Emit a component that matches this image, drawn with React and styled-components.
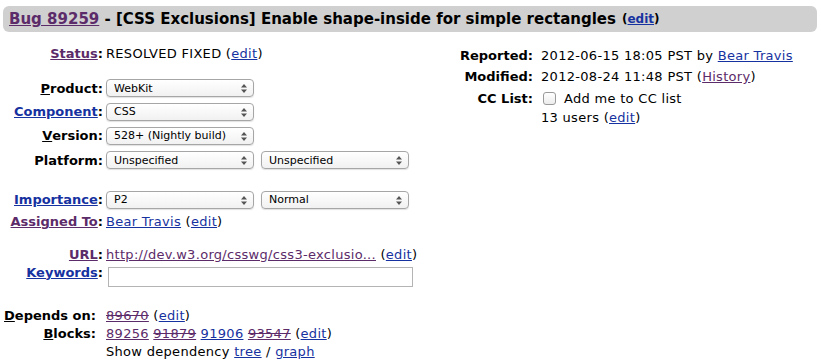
import React from 'react';
import styled, { createGlobalStyle } from 'styled-components';

const GlobalStyle = createGlobalStyle`
  body {
    margin: 0;
    background: #fff;
    font-family: "DejaVu Sans", Verdana, sans-serif;
    font-size: 13px;
    color: #000;
  }
`;

const Page = styled.div`
  width: 821px;
  height: 362px;
  overflow: hidden;
  padding: 6px 4px 0 3px;
  box-sizing: border-box;
`;

const TitleBar = styled.div`
  background: #d0d0d0;
  border-radius: 6px;
  height: 26px;
  display: flex;
  align-items: center;
  padding-left: 6px;
  font-size: 15px;
  font-weight: bold;
  white-space: nowrap;
`;

const Link = styled.a`
  color: ${(p) => (p.$visited ? '#5c2b69' : '#1632a0')};
  text-decoration: ${(p) => (p.$strike ? 'underline line-through' : 'underline')};
  cursor: pointer;
`;

const SmallEdit = styled.span`
  font-size: 12px;
  margin-left: 6px;
`;

const Columns = styled.div`
  display: flex;
  gap: 34px;
`;

const LeftColumn = styled.div`
  width: 410px;
  padding-top: 12px;
`;

const RightColumn = styled.div`
  padding-top: 12.5px;
`;

const FieldGrid = styled.div`
  display: grid;
  grid-template-columns: ${(p) => p.$labelWidth}px 1fr;
  margin-top: ${(p) => p.$top || 0}px;
`;

const Label = styled.div`
  font-weight: bold;
  text-align: right;
  padding-right: ${(p) => p.$pad ?? 3}px;
  height: ${(p) => p.$h}px;
  display: flex;
  align-items: center;
  justify-content: flex-end;
  white-space: nowrap;
`;

const Value = styled.div`
  height: ${(p) => p.$h}px;
  display: flex;
  align-items: ${(p) => (p.$top ? 'flex-start' : 'center')};
  padding-top: ${(p) => p.$top || 0}px;
  box-sizing: border-box;
  gap: ${(p) => p.$gap ?? 0}px;
  white-space: nowrap;
  letter-spacing: 0.3px;
`;

const U = styled.span`
  text-decoration: underline;
`;

const SelectWrap = styled.div`
  position: relative;
  width: 148px;
  height: 18px;
  letter-spacing: 0;
`;

const Select = styled.select`
  appearance: none;
  width: 100%;
  height: 100%;
  border: 1px solid #a6a6a6;
  border-radius: 4px;
  background: linear-gradient(#ffffff, #f1f1f1);
  box-shadow: 0 1px 1px rgba(0, 0, 0, 0.12);
  font-family: "DejaVu Sans", Verdana, sans-serif;
  font-size: 11px;
  color: #000;
  padding: 0 0 0 7px;
  margin: 0;
`;

const Arrows = styled.svg`
  position: absolute;
  right: 7px;
  top: 5px;
  pointer-events: none;
`;

const Keywords = styled.input`
  width: 305px;
  height: 20px;
  box-sizing: border-box;
  border: 1px solid #b4b4b4;
  margin: 0 0 0 2px;
`;

const Checkbox = styled.span`
  display: inline-block;
  width: 11px;
  height: 11px;
  border: 1px solid #9a9a9a;
  border-radius: 3px;
  background: linear-gradient(#fff, #ececec);
  margin: 0 8px 0 2px;
`;

function Dropdown({ value }) {
  return (
    <SelectWrap>
      <Select defaultValue={value}>
        <option>{value}</option>
      </Select>
      <Arrows width="6" height="9" viewBox="0 0 6 9">
        <path d="M0 3.5 L3 0 L6 3.5 Z M0 5.5 L3 9 L6 5.5 Z" fill="#555" />
      </Arrows>
    </SelectWrap>
  );
}

export default function App() {
  return (
    <Page>
      <GlobalStyle />
      <TitleBar>
        <Link $visited>Bug 89259</Link>
        &nbsp;- [CSS Exclusions] Enable shape-inside for simple rectangles
        <SmallEdit>
          (<Link>edit</Link>)
        </SmallEdit>
      </TitleBar>

      <Columns>
        <LeftColumn>
          <FieldGrid $labelWidth={103}>
            <Label $h={18}><Link $visited>Status</Link>:</Label>
            <Value $h={18}>RESOLVED FIXED (<Link>edit</Link>)</Value>
          </FieldGrid>

          <FieldGrid $labelWidth={103} $top={14.5}>
            <Label $h={23}><U>P</U>roduct:</Label>
            <Value $h={23}><Dropdown value="WebKit" /></Value>
            <Label $h={24}><Link>Component</Link>:</Label>
            <Value $h={24}><Dropdown value="CSS" /></Value>
            <Label $h={24}><U>V</U>ersion:</Label>
            <Value $h={24}><Dropdown value="528+ (Nightly build)" /></Value>
            <Label $h={25}>Platform:</Label>
            <Value $h={25} $gap={7}>
              <Dropdown value="Unspecified" />
              <Dropdown value="Unspecified" />
            </Value>
          </FieldGrid>

          <FieldGrid $labelWidth={103} $top={15}>
            <Label $h={24}><Link>Importance</Link>:</Label>
            <Value $h={24} $gap={7}>
              <Dropdown value="P2" />
              <Dropdown value="Normal" />
            </Value>
            <Label $h={20}><Link $visited>Assigned To</Link>:</Label>
            <Value $h={20}><Link>Bear Travis</Link>&nbsp;(<Link>edit</Link>)</Value>
          </FieldGrid>

          <FieldGrid $labelWidth={103} $top={13.5}>
            <Label $h={18}><Link $visited>URL</Link>:</Label>
            <Value $h={18}>
              <Link $visited>http://dev.w3.org/csswg/css3-exclusio...</Link>
              &nbsp;(<Link>edit</Link>)
            </Value>
            <Label $h={18} style={{ alignSelf: 'start' }}><Link>Keywords</Link>:</Label>
            <Value $h={26} $top={4}><Keywords type="text" /></Value>
          </FieldGrid>

          <FieldGrid $labelWidth={103} $top={18}>
            <Label $h={17} $pad={10}><U>D</U>epends on:</Label>
            <Value $h={17}>
              <Link $visited $strike>89670</Link>&nbsp;(<Link>edit</Link>)
            </Value>
            <Label $h={18} $pad={10}><U>B</U>locks:</Label>
            <Value $h={18}>
              <Link $visited>89256</Link>&nbsp;
              <Link $visited $strike>91879</Link>&nbsp;
              <Link>91906</Link>&nbsp;
              <Link $visited $strike>93547</Link>&nbsp;(<Link>edit</Link>)
            </Value>
            <span />
            <Value $h={18}>
              Show dependency&nbsp;<Link>tree</Link>&nbsp;/&nbsp;<Link>graph</Link>
            </Value>
          </FieldGrid>
        </LeftColumn>

        <RightColumn>
          <FieldGrid $labelWidth={94}>
            <Label $h={21} $pad={8}>Reported:</Label>
            <Value $h={21}>2012-06-15 18:05 PST by&nbsp;<Link>Bear Travis</Link></Value>
            <Label $h={22} $pad={8}>Modified:</Label>
            <Value $h={22}>2012-08-24 11:48 PST (<Link $visited>History</Link>)</Value>
            <Label $h={22} $pad={8}>CC List:</Label>
            <Value $h={22}><Checkbox />Add me to CC list</Value>
            <span />
            <Value $h={15}>13 users (<Link>edit</Link>)</Value>
          </FieldGrid>
        </RightColumn>
      </Columns>
    </Page>
  );
}
